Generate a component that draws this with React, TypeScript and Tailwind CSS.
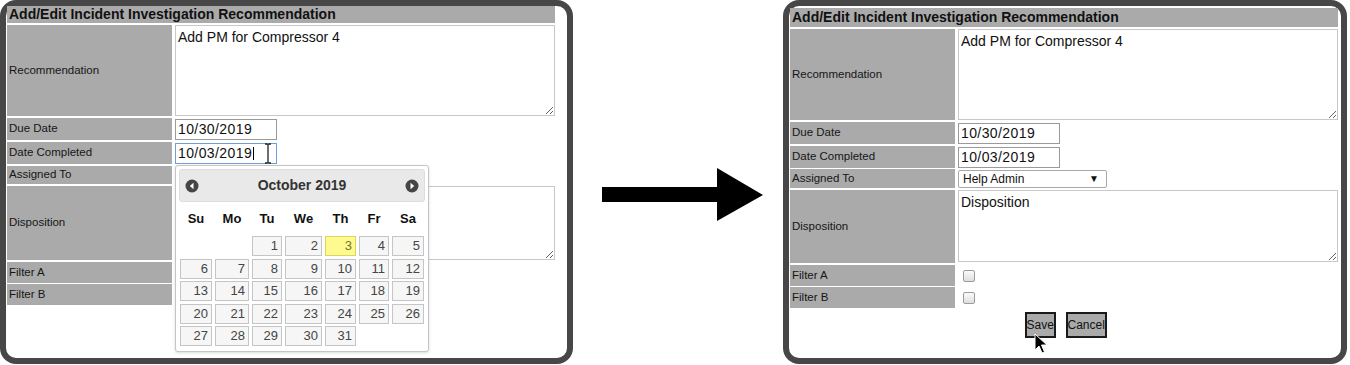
import React from 'react';

const weeks: (number | null)[][] = [
  [null, null, 1, 2, 3, 4, 5],
  [6, 7, 8, 9, 10, 11, 12],
  [13, 14, 15, 16, 17, 18, 19],
  [20, 21, 22, 23, 24, 25, 26],
  [27, 28, 29, 30, 31, null, null],
];

const dayNames = ['Su', 'Mo', 'Tu', 'We', 'Th', 'Fr', 'Sa'];

// gray label cell + white value cell
const Row = ({
  label,
  className,
  children,
}: {
  label: string;
  className: string;
  children?: React.ReactNode;
}) => (
  <div className={`flex ${className}`}>
    <div className="w-[165px] shrink-0 bg-[#aaaaaa] flex items-center pl-[2px] text-[11.5px] text-[#161616]">
      {label}
    </div>
    <div className="flex-1 ml-[2px] pl-[1px] flex items-center">{children}</div>
  </div>
);

const Header = () => (
  <div className="h-full bg-[#aaaaaa] flex items-center pl-[2px] text-[14px] font-bold text-[#111]">
    Add/Edit Incident Investigation Recommendation
  </div>
);

const Area = ({ text, className }: { text?: string; className: string }) => (
  <textarea
    readOnly
    defaultValue={text}
    className={`w-[380px] resize border border-[#c8c8c8] bg-white px-[2px] py-[1px] text-[14px] text-[#111] outline-none font-['Liberation_Sans',Arial,sans-serif] ${className}`}
  />
);

const DateBox = ({ value, focused }: { value: string; focused?: boolean }) => (
  <div
    className={`w-[102px] h-[21px] flex items-center pl-[2px] text-[14px] tracking-[0.4px] text-[#111] bg-white border ${
      focused ? 'border-[#6f9fd8]' : 'border-[#9a9a9a]'
    }`}
  >
    {value}
    {focused && <span className="ml-[1px] w-[1px] h-[13px] bg-black" />}
  </div>
);

const CheckBox = () => (
  <span className="ml-[5px] w-[12px] h-[12px] rounded-[2px] border border-[#9c9c9c] bg-gradient-to-b from-[#fbfbfb] to-[#dedede]" />
);

const NavIcon = ({ dir }: { dir: 'prev' | 'next' }) => (
  <svg width="14" height="14" viewBox="0 0 14 14">
    <circle cx="7" cy="7" r="6.5" fill="#454545" />
    {dir === 'prev' ? (
      <polygon points="8.5,3.8 8.5,10.2 4.8,7" fill="#ffffff" />
    ) : (
      <polygon points="5.5,3.8 5.5,10.2 9.2,7" fill="#ffffff" />
    )}
  </svg>
);

const Calendar = () => (
  <div className="absolute left-[169px] top-[159px] w-[254px] h-[187px] bg-white border border-[#c5c5c5] rounded-[3px] shadow-[0_1px_3px_rgba(0,0,0,0.15)] p-[3px] font-['Liberation_Sans',Arial,sans-serif]">
    <div className="h-[33px] bg-[#e9e9e9] border border-[#dddddd] rounded-[3px] flex items-center justify-between px-[5px]">
      <NavIcon dir="prev" />
      <span className="text-[14px] font-bold text-[#333]">October 2019</span>
      <NavIcon dir="next" />
    </div>
    <div className="mt-[3px] ml-[1px] h-[28px] grid grid-cols-[32px_34px_30px_37px_31px_30px_32px] gap-x-[3px] items-center">
      {dayNames.map((d) => (
        <span key={d} className="text-center text-[13px] font-bold text-[#111]">
          {d}
        </span>
      ))}
    </div>
    <div className="mt-[3px] ml-[1px] grid grid-cols-[32px_34px_30px_37px_31px_30px_32px] auto-rows-[20px] gap-x-[3px] gap-y-[2.5px]">
      {weeks.flat().map((d, i) =>
        d === null ? (
          <span key={i} />
        ) : (
          <span
            key={i}
            className={`border text-right pr-[3px] text-[13px] leading-[18px] ${
              d === 3
                ? 'bg-[#fffa90] border-[#dad55e] text-[#777620]'
                : 'bg-[#f6f6f6] border-[#c5c5c5] text-[#454545]'
            }`}
          >
            {d}
          </span>
        )
      )}
    </div>
  </div>
);

export default function App() {
  return (
    <div className="w-[1350px] h-[365px] bg-white flex overflow-hidden font-['Liberation_Sans',Arial,sans-serif]">
      {/* before */}
      <div className="relative w-[573px] h-[364px] shrink-0 border-[6px] border-[#474747] rounded-[16px] pl-[1px] pr-[12px]">
        <div className="h-[17px]">
          <Header />
        </div>
        <Row label="Recommendation" className="mt-[2px] h-[91px]">
          <Area text="Add PM for Compressor 4" className="h-[91px]" />
        </Row>
        <Row label="Due Date" className="mt-[2px] h-[22px]">
          <DateBox value="10/30/2019" />
        </Row>
        <Row label="Date Completed" className="mt-[2px] h-[22px]">
          <DateBox value="10/03/2019" focused />
        </Row>
        <Row label="Assigned To" className="mt-[2px] h-[18px]" />
        <Row label="Disposition" className="mt-[2px] h-[74px]">
          <Area className="h-[74px]" />
        </Row>
        <Row label="Filter A" className="mt-[2px] h-[21px]" />
        <Row label="Filter B" className="mt-[1px] h-[21px]" />

        <Calendar />

        {/* text cursor over the date field */}
        <svg className="absolute left-[258px] top-[137px]" width="8" height="21" viewBox="0 0 8 21">
          <path d="M1 1h2.5M4.5 1H7M4 1v19M1 20h2.5M4.5 20H7" stroke="#222" strokeWidth="1.3" fill="none" />
        </svg>
      </div>

      {/* arrow */}
      <div className="w-[210px] shrink-0">
        <svg className="ml-[29px] mt-[168px]" width="162" height="54" viewBox="0 0 162 54">
          <rect x="0" y="19" width="117" height="15" fill="#000" />
          <polygon points="115,0 161,27 115,53" fill="#000" />
        </svg>
      </div>

      {/* after */}
      <div className="relative w-[564px] h-[364px] shrink-0 border-[6px] border-[#474747] rounded-[16px] pt-[2px] pl-[1px] pr-[3px]">
        <div className="h-[19px]">
          <Header />
        </div>
        <Row label="Recommendation" className="mt-[2px] h-[91px]">
          <Area text="Add PM for Compressor 4" className="h-[91px]" />
        </Row>
        <Row label="Due Date" className="mt-[2px] h-[22px]">
          <DateBox value="10/30/2019" />
        </Row>
        <Row label="Date Completed" className="mt-[2px] h-[22px]">
          <DateBox value="10/03/2019" />
        </Row>
        <Row label="Assigned To" className="mt-[1px] h-[19px]">
          <div className="w-[149px] h-[18px] border border-[#a9a9a9] rounded-[2px] bg-white flex items-center justify-between pl-[4px] pr-[7px] text-[12px] text-[#111]">
            <span>Help Admin</span>
            <span className="text-[10px]">▼</span>
          </div>
        </Row>
        <Row label="Disposition" className="mt-[2px] h-[73px]">
          <Area text="Disposition" className="h-[72px] self-start" />
        </Row>
        <Row label="Filter A" className="mt-[2px] h-[21px]">
          <CheckBox />
        </Row>
        <Row label="Filter B" className="mt-[1px] h-[21px]">
          <CheckBox />
        </Row>
        <div className="mt-[4px] flex justify-center gap-[10px] pl-[3px]">
          <button className="w-[31px] h-[26px] bg-[#aaaaaa] border-2 border-[#1a1a1a] text-[12px] text-[#111]">Save</button>
          <button className="w-[41px] h-[26px] bg-[#aaaaaa] border-2 border-[#1a1a1a] text-[12px] text-[#111]">Cancel</button>
        </div>

        {/* mouse pointer */}
        <svg className="absolute left-[245px] top-[327px]" width="13" height="21" viewBox="0 0 13 21">
          <path d="M1 1v16l4-4 3 7 2.5-1-3-7h5.5z" fill="#000" stroke="#fff" strokeWidth="1" strokeLinejoin="round" />
        </svg>
      </div>
    </div>
  );
}
